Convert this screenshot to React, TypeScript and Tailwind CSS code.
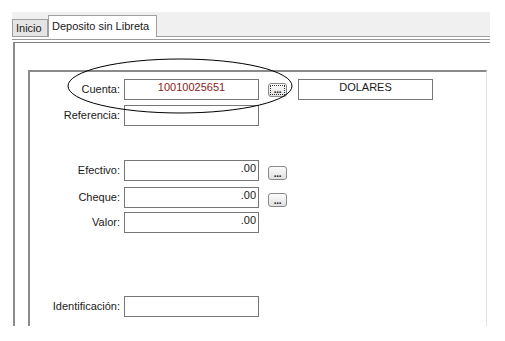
import React from "react";

type Row = {
  label: string;
  value?: string;
  align?: "left" | "center" | "right";
  valueClass?: string;
  button?: "focus" | "plain";
  mt: string;
  extra?: string;
};

const rows: Row[] = [
  { label: "Cuenta:", value: "10010025651", align: "center", valueClass: "text-[#8b1a1a]", button: "focus", mt: "mt-[7px]", extra: "DOLARES" },
  { label: "Referencia:", mt: "mt-[5px]" },
  { label: "Efectivo:", value: ".00", align: "right", button: "plain", mt: "mt-[34px]" },
  { label: "Cheque:", value: ".00", align: "right", button: "plain", mt: "mt-[6px]" },
  { label: "Valor:", value: ".00", align: "right", mt: "mt-[4px]" },
  { label: "Identificación:", mt: "mt-[63px]" },
];

const DotsButton: React.FC<{ focused?: boolean }> = ({ focused }) => (
  <div
    className={`ml-[9px] w-[19px] h-[14px] self-end ${focused ? "mb-[3px]" : "mb-px"} rounded-[3px] border border-[#8a8a8a] bg-gradient-to-b from-[#fcfcfc] to-[#e0e0e0] p-px`}
  >
    <div
      className={`w-full h-full flex items-end justify-center pb-px ${focused ? "border border-dotted border-[#333]" : ""}`}
    >
      <span className="text-[10px] leading-[6px] font-bold text-[#1a1a1a] tracking-[-0.3px]">...</span>
    </div>
  </div>
);

const App: React.FC = () => {
  return (
    <div className="relative w-[505px] h-[341px] bg-white overflow-hidden font-['Liberation_Sans',Arial,sans-serif] text-[11px] text-[#1a1a1a]">
      <div className="ml-[12px] mt-[12px] w-[478px]">
        {/* tab strip */}
        <div className="h-[25px] bg-[#f0f0f0] border-b border-[#a0a0a0] flex items-end">
          <div className="w-[36px] h-[17px] bg-[#e4e4e4] border border-b-0 border-[#a0a0a0] pl-[3px] pt-[2px] leading-[13px]">
            Inicio
          </div>
          <div className="relative w-[109px] h-[22px] -mb-px bg-white border border-b-0 border-[#a0a0a0] pl-[3px] pt-[4px] leading-[13px]">
            Deposito sin Libreta
          </div>
        </div>

        {/* outer panel */}
        <div className="mt-[2px] border-t border-[#9a9a9a]">
          <div className="mt-[2px] ml-px h-[284px] border-t border-t-[#7f7f7f] border-l-2 border-l-[#8c8c8c] pl-[13px] pt-[27px]">
            {/* inner panel */}
            <div className="w-[459px] h-[256px] border-t-2 border-l-2 border-r border-t-[#8a8a8a] border-l-[#8a8a8a] border-r-[#e2e2e2] flex flex-col">
              {rows.map((r) => (
                <div key={r.label} className={`${r.mt} h-[21px] flex items-center`}>
                  <div className="w-[90px] text-right leading-[13px]">{r.label}</div>
                  <div
                    className={`ml-[4px] w-[135px] h-[21px] border border-[#767676] bg-white px-[2px] pt-px leading-[13px] ${
                      r.align === "center" ? "text-center" : r.align === "right" ? "text-right" : "text-left"
                    } ${r.valueClass ?? ""}`}
                  >
                    {r.value}
                  </div>
                  {r.button && <DotsButton focused={r.button === "focus"} />}
                  {r.extra && (
                    <div className="ml-[11px] w-[135px] h-[21px] border border-[#767676] bg-white pt-px leading-[13px] text-center">
                      {r.extra}
                    </div>
                  )}
                </div>
              ))}
            </div>
          </div>
        </div>
      </div>

      {/* hand-drawn highlight */}
      <svg className="absolute left-0 top-0 pointer-events-none" width="505" height="341">
        <ellipse cx="180" cy="86" rx="112" ry="27" fill="none" stroke="#000" strokeWidth="1" />
      </svg>
    </div>
  );
};

export default App;
